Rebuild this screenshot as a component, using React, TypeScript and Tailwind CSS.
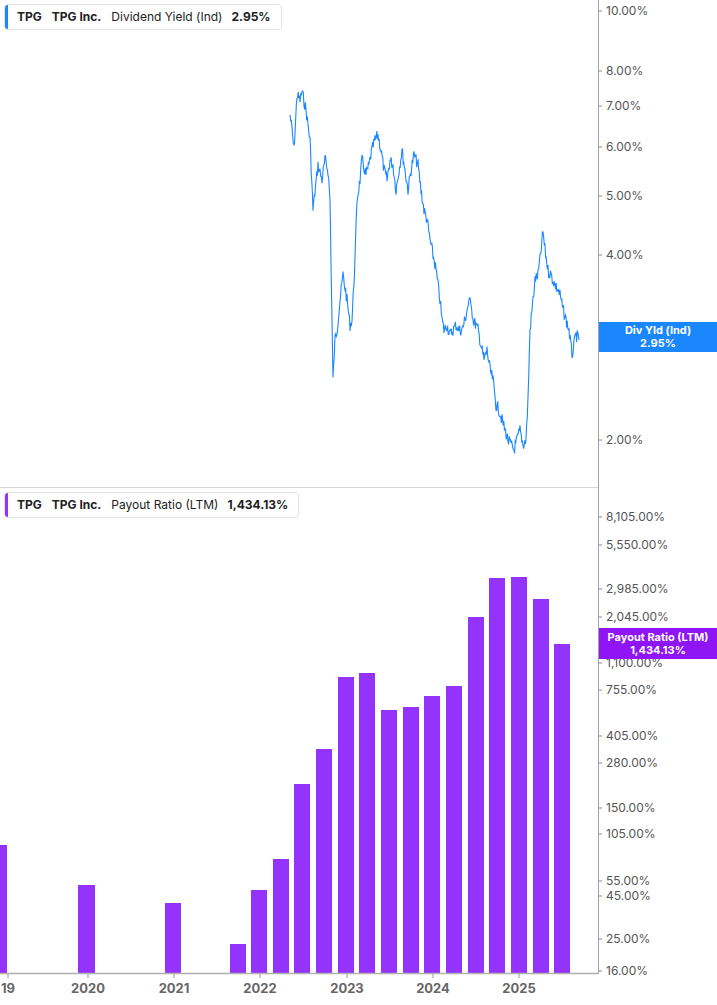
import React from "react";

const pts: [number, number][] = [[290,115],[292,130],[294,150],[297,95],[300,100],[302,92],[306,110],[310,140],[313,210],[318,165],[322,180],[325,160],[328,170],[330,200],[333,380],[335,340],[337,330],[340,300],[343,275],[347,300],[350,325],[352,320],[355,260],[357,200],[360,180],[362,160],[366,175],[369,165],[372,150],[375,140],[378,135],[381,150],[384,170],[387,180],[390,160],[393,165],[396,190],[399,170],[402,150],[405,170],[408,190],[411,170],[414,155],[418,165],[421,190],[424,210],[427,220],[430,240],[433,255],[436,270],[438,285],[440,300],[442,320],[444,330],[447,325],[450,335],[453,330],[456,325],[459,330],[462,330],[465,320],[468,305],[471,300],[473,320],[476,325],[478,330],[481,345],[484,360],[487,350],[490,370],[493,380],[496,405],[499,410],[502,420],[505,430],[508,440],[511,445],[514,450],[517,440],[520,430],[523,445],[526,440],[528,400],[530,330],[533,300],[535,280],[538,275],[540,260],[543,232],[545,250],[548,270],[551,275],[555,285],[558,290],[560,295],[563,310],[566,320],[569,330],[572,355],[574,345],[576,335],[579,340]];
const d = (() => {
  let s = "";
  let seed = 7;
  const rnd = () => { seed = (seed * 9301 + 49297) % 233280; return seed / 233280; };
  for (let i = 0; i < pts.length - 1; i++) {
    const [x1, y1] = pts[i], [x2, y2] = pts[i + 1];
    const n = Math.max(2, Math.round((x2 - x1) * 1.5));
    for (let k = 0; k < n; k++) {
      const t = k / n;
      const x = x1 + (x2 - x1) * t;
      const y = y1 + (y2 - y1) * t + (rnd() - 0.5) * 12;
      s += (s ? "L" : "M") + x.toFixed(1) + "," + y.toFixed(1);
    }
  }
  s += "L579,340";
  return s;
})();

const bars: [number, number, number][] = [[0,7,845],[78,95,885],[165,181,903],[230,246,944],[251,267,890],[273,289,859],[294,310,784],[316,332,749],[338,354,677],[359,375,673],[381,397,710],[403,419,707],[424,440,696],[446,462,686],[468,484,617],[489,505,578],[511,527,577],[533,549,599],[554,570,644]];

const topTicks: [string, number][] = [["10.00%",11],["8.00%",71],["7.00%",106],["6.00%",147],["5.00%",196],["4.00%",255],["2.00%",440]];
const botTicks: [string, number][] = [["8,105.00%",517],["5,550.00%",545],["2,985.00%",589],["2,045.00%",617],["1,100.00%",663],["755.00%",690],["405.00%",736],["280.00%",763],["150.00%",808],["105.00%",834],["55.00%",881],["45.00%",896],["25.00%",939],["16.00%",971]];
const years: [string, number][] = [["19",8],["2020",88],["2021",174],["2022",260],["2023",347],["2024",433],["2025",519]];

export default function App() {
  return (
    <div className="relative w-[717px] h-[1005px] bg-white overflow-hidden" style={{ fontFamily: "Inter, 'Liberation Sans', sans-serif" }}>
      <svg className="absolute left-0 top-0" width="717" height="1005">
        <path d={d} fill="none" stroke="#1a87ff" strokeWidth="1.1" />
        {bars.map(([a, b, t], i) => (
          <rect key={i} x={a} y={t} width={b - a} height={973 - t} fill="#9333fb" />
        ))}
        <line x1="598.5" y1="0" x2="598.5" y2="974" stroke="#a3a3a3" strokeWidth="1" />
        <line x1="0" y1="487.5" x2="598" y2="487.5" stroke="#d4d4d4" strokeWidth="1" />
        <line x1="0" y1="973.5" x2="599" y2="973.5" stroke="#b0b0b0" strokeWidth="1.5" />
        {[...topTicks, ...botTicks].map(([l, y]) => (
          <line key={l} x1="599" y1={y} x2="602" y2={y} stroke="#888" />
        ))}
        {years.map(([l, x]) => (
          <line key={l} x1={x} y1="974" x2={x} y2="978" stroke="#999" />
        ))}
      </svg>
      {[...topTicks, ...botTicks].map(([l, y]) => (
        <div key={l} className="absolute left-[606px] text-[12px] leading-none text-[#555]" style={{ top: y - 6 }}>{l}</div>
      ))}
      {years.map(([l, x]) => (
        <div key={l} className="absolute top-[982px] text-[13px] font-bold text-[#666] -translate-x-1/2 leading-none" style={{ left: x }}>{l}</div>
      ))}
      <div className="absolute left-[599px] top-[322px] w-[118px] h-[30px] bg-[#1a87ff] text-white text-[11px] font-bold flex flex-col items-center justify-center leading-[13px]">
        <span>Div Yld (Ind)</span><span>2.95%</span>
      </div>
      <div className="absolute left-[599px] top-[628px] w-[118px] h-[31px] bg-[#9015f5] text-white text-[11px] font-bold flex flex-col items-center justify-center leading-[13px]">
        <span>Payout Ratio (LTM)</span><span>1,434.13%</span>
      </div>
      <div className="absolute left-[4px] top-[4px] h-[26px] pr-[10px] bg-white border border-[#e5e5e5] rounded flex items-center text-[12px] text-[#222] whitespace-nowrap overflow-hidden">
        <div className="w-[3px] h-full bg-[#1a87ff]" />
        <span className="font-bold ml-[9px]">TPG</span>
        <span className="font-bold ml-[10px]">TPG Inc.</span>
        <span className="ml-[10px]">Dividend Yield (Ind)</span>
        <span className="font-bold ml-[9px]">2.95%</span>
      </div>
      <div className="absolute left-[4px] top-[492px] h-[26px] pr-[10px] bg-white border border-[#e5e5e5] rounded flex items-center text-[12px] text-[#222] whitespace-nowrap overflow-hidden">
        <div className="w-[3px] h-full bg-[#9333fb]" />
        <span className="font-bold ml-[9px]">TPG</span>
        <span className="font-bold ml-[10px]">TPG Inc.</span>
        <span className="ml-[10px]">Payout Ratio (LTM)</span>
        <span className="font-bold ml-[9px]">1,434.13%</span>
      </div>
    </div>
  );
}
